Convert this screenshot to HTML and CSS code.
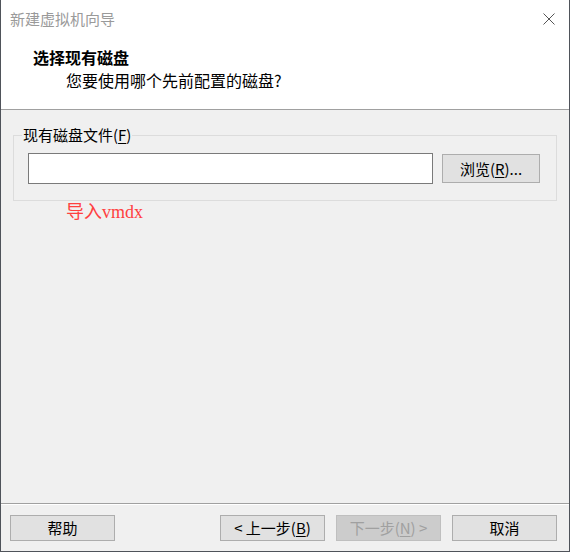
FILE: index.html
```html
<!DOCTYPE html>
<html lang="zh-CN">
<head>
<meta charset="utf-8">
<title>新建虚拟机向导</title>
<link rel="stylesheet" href="styles.css">
</head>
<body>
<div class="window">
  <div class="titlebar">
    <span class="title">新建虚拟机向导</span>
    <svg class="close" width="12" height="12" viewBox="0 0 12 12"><path d="M0.5 0.5 L11.5 11.5 M11.5 0.5 L0.5 11.5" stroke="#555" stroke-width="1" fill="none"/></svg>
  </div>
  <div class="header">
    <div class="h-title">选择现有磁盘</div>
    <div class="h-sub">您要使用哪个先前配置的磁盘?</div>
  </div>
  <div class="content">
    <fieldset class="group">
      <legend class="group-label">现有磁盘文件(<u>F</u>)</legend>
      <div class="file-row">
        <div class="input"></div>
        <div class="btn browse">浏览(<u>R</u>)...</div>
      </div>
    </fieldset>
    <div class="note">导入vmdx</div>
  </div>
  <div class="footer">
    <div class="btn">帮助</div>
    <div class="spacer"></div>
    <div class="btn">&lt; 上一步(<u>B</u>)</div>
    <div class="btn disabled">下一步(<u>N</u>) &gt;</div>
    <div class="btn">取消</div>
  </div>
</div>
</body>
</html>
```
FILE: styles.css
```css
html, body {
  margin: 0;
  padding: 0;
  background: #f0f0f0;
}
.window {
  width: 570px;
  height: 552px;
  box-sizing: border-box;
  border: 1px solid #4f535a;
  border-top: none;
  display: flex;
  flex-direction: column;
  font-family: "Noto Sans CJK SC", "Noto Sans", sans-serif;
  font-size: 15px;
  color: #000;
  background: #f0f0f0;
}
.titlebar {
  height: 38px;
  flex: none;
  background: #fff;
  display: flex;
  align-items: center;
  justify-content: space-between;
  padding: 0 14px 0 9px;
}
.title {
  color: #9a9a9a;
  font-size: 15px;
  line-height: 20px;
}
.close {
  display: block;
}
.header {
  height: 72px;
  flex: none;
  background: #fff;
  border-bottom: 1px solid #a0a0a0;
  box-sizing: border-box;
  padding: 9px 0 0 32px;
}
.h-title {
  font-size: 16px;
  font-weight: bold;
  line-height: 20px;
}
.h-sub {
  font-size: 16px;
  line-height: 20px;
  margin: 3px 0 0 33px;
}
.content {
  flex: 1;
  padding-top: 16px;
}
.group {
  margin: 0 12px;
  padding: 0 13px 16px 14px;
  border: 1px solid #dcdcdc;
  min-width: 0;
}
.group-label {
  padding: 0 1px;
  margin-left: -6px;
  line-height: 18px;
  font-size: 15px;
}
u {
  text-decoration: underline;
  text-underline-offset: 2px;
}
.file-row {
  display: flex;
  align-items: center;
  margin-top: 9px;
}
.input {
  width: 405px;
  height: 31px;
  box-sizing: border-box;
  border: 1px solid #7a7a7a;
  background: #fff;
}
.btn {
  width: 105px;
  height: 26px;
  box-sizing: border-box;
  border: 1px solid #adadad;
  background: #e1e1e1;
  display: flex;
  align-items: center;
  justify-content: center;
  font-size: 15px;
  line-height: 18px;
}
.browse {
  width: 98px;
  height: 29px;
  margin-left: 9px;
}
.note {
  margin: 0 0 0 65px;
  color: #ff4040;
  font-family: "Liberation Serif", "Noto Sans CJK SC", serif;
  font-size: 18px;
  line-height: 22px;
}
.footer {
  height: 48px;
  flex: none;
  box-sizing: border-box;
  border-top: 1px solid #a0a0a0;
  box-shadow: inset 0 1px 0 #fff;
  display: flex;
  align-items: flex-start;
  padding: 11px 12px 0 9px;
  gap: 11px;
}
.spacer {
  flex: 1;
}
.disabled {
  color: #a0a0a0;
  background: #cccccc;
  border-color: #bfbfbf;
}
```
